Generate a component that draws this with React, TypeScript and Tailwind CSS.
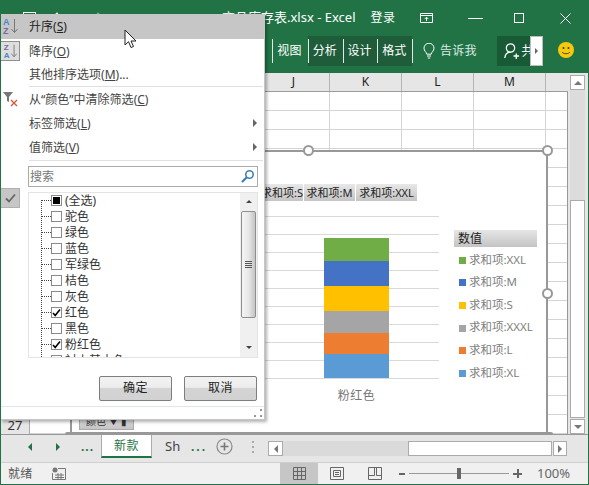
import React from "react";

const FONT = { fontFamily: '"Noto Sans","Noto Sans CJK SC",sans-serif' };
const rows = Array.from({ length: 18 });
const listItems: [string, "none" | "mixed" | "checked"][] = [
  ["(全选)", "mixed"],
  ["驼色", "none"],
  ["绿色", "none"],
  ["蓝色", "none"],
  ["军绿色", "none"],
  ["桔色", "none"],
  ["灰色", "none"],
  ["红色", "checked"],
  ["黑色", "none"],
  ["粉红色", "checked"],
  ["衬上基本色", "none"],
];
const legend = [
  ["#70ad47", "求和项:XXL"],
  ["#4472c4", "求和项:M"],
  ["#ffc000", "求和项:S"],
  ["#a5a5a5", "求和项:XXXL"],
  ["#ed7d31", "求和项:L"],
  ["#5b9bd5", "求和项:XL"],
];

function Handle({ className }: { className: string }) {
  return <div className={`absolute w-[11px] h-[11px] rounded-full bg-white border-2 border-[#989898] ${className}`} />;
}

function Dome({ className }: { className: string }) {
  return <div className={`absolute w-[11px] h-[2px] rounded-t-full bg-[#989898] ${className}`} />;
}

function SortIcon({ top, bottom }: { top: string; bottom: string }) {
  return (
    <svg width="20" height="20" viewBox="0 0 20 20">
      <text x="3" y="9" fontSize="9" fontWeight="700" fontFamily="Liberation Sans" fill={top === "A" ? "#4a86c8" : "#8064a2"}>{top}</text>
      <text x="3" y="18" fontSize="9" fontWeight="700" fontFamily="Liberation Sans" fill={bottom === "A" ? "#4a86c8" : "#8064a2"}>{bottom}</text>
      <path d="M14.5 3v13M11.5 13l3 3.5 3-3.5" fill="none" stroke="#777" strokeWidth="1" />
    </svg>
  );
}

function MenuRow({ label, k, suffix, arrow, active, icon, boxed }: { label: string; k: string; suffix?: string; arrow?: boolean; active?: boolean; icon?: React.ReactNode; boxed?: boolean }) {
  return (
    <div className={`h-[24px] flex items-center relative ${active ? "bg-[#c6c6c6] text-[#222]" : "text-[#444]"}`}>
      <div className={`w-[20px] h-[20px] flex items-center justify-center ${boxed ? "border border-[#8f8f8f] bg-[#dedede]" : ""}`}>{icon}</div>
      <span className="ml-[9px] relative top-[1px] text-[12px] leading-none whitespace-nowrap">
        {label}(<span className="underline">{k}</span>){suffix}
      </span>
      {arrow && <div className="absolute right-[7px] w-0 h-0 border-y-[4px] border-y-transparent border-l-[4px] border-l-[#666]" />}
    </div>
  );
}

function CheckBox({ state }: { state: "none" | "mixed" | "checked" }) {
  return (
    <div className="w-[11px] h-[11px] -mt-px border border-[#8a8a8a] bg-white flex items-center justify-center shrink-0">
      {state === "mixed" && <div className="w-[7px] h-[7px] bg-black" />}
      {state === "checked" && (
        <svg width="9" height="9" viewBox="0 0 9 9"><path d="M1 5l2.2 2.5L8 1.5" fill="none" stroke="#000" strokeWidth="1.6" /></svg>
      )}
    </div>
  );
}

function Menu() {
  return (
    <div className="absolute left-[-1px] top-[14px] w-[265px] h-[406px] bg-white border-r border-b border-[#c6c6c6] shadow-[2px_2px_3px_rgba(0,0,0,0.3)] flex flex-col">
      <div className="h-[25px] flex flex-col justify-center bg-[#c6c6c6]">
        <MenuRow active label="升序" k="S" icon={<SortIcon top="A" bottom="Z" />} />
      </div>
      <MenuRow boxed label="降序" k="O" icon={<SortIcon top="Z" bottom="A" />} />
      <MenuRow label="其他排序选项" k="M" suffix="..." />
      <div className="h-px bg-[#e0e0e0] ml-[29px] mr-px" />
      <div>
        <MenuRow
          label="从“颜色”中清除筛选"
          k="C"
          icon={
            <svg width="18" height="18" viewBox="0 0 18 18">
              <path d="M2 2h10L8 7v5L6 11V7z" fill="#777" />
              <path d="M10 10l6 6M16 10l-6 6" stroke="#d9553a" strokeWidth="1.4" />
            </svg>
          }
        />
        <MenuRow label="标签筛选" k="L" arrow />
        <MenuRow label="值筛选" k="V" arrow />
      </div>
      <div className="h-px bg-[#e0e0e0] ml-[29px] mr-px mt-[1px]" />
      <div className="relative ml-[28px] mr-[6px] mt-[5px] h-[21px] border border-[#ababab] bg-white flex items-center justify-between pl-[1px] pr-[2px]">
        <span className="text-[12px] text-[#777] leading-none">搜索</span>
        <svg width="15" height="15" viewBox="0 0 15 15">
          <circle cx="9.5" cy="5.5" r="3.7" fill="none" stroke="#3f7fb5" strokeWidth="1.6" />
          <path d="M6.8 8.2L2 13" stroke="#3f7fb5" strokeWidth="2.2" />
        </svg>
      </div>
      <div className="absolute left-0 top-[174px] w-[20px] h-[20px] bg-[#c6c6c6] border border-[#b0b0b0] flex items-center justify-center">
        <svg width="11" height="10" viewBox="0 0 11 10"><path d="M1 5.5l3 3L10 1.5" fill="none" stroke="#666" strokeWidth="1.8" /></svg>
      </div>
      <div className="ml-[28px] mr-[6px] mt-[5px] h-[168px] border border-[#e4e4e4] bg-white flex overflow-hidden">
        <div className="flex-1 pl-[22px] relative overflow-hidden">
          <div className="absolute left-[12px] top-[7px] bottom-0 border-l border-dotted border-[#444]" />
          <div>
            {listItems.map(([t, s]) => (
              <div key={t} className="h-[16px] flex items-center relative">
                <div className="absolute left-[-9px] w-[9px] border-t border-dotted border-[#444]" />
                <CheckBox state={s} />
                <span className="ml-[3px] text-[12px] leading-none text-[#333] whitespace-nowrap">{t}</span>
              </div>
            ))}
          </div>
        </div>
        <div className="w-[17px] bg-[#f0f0f0] flex flex-col items-center shrink-0">
          <div className="h-[18px] flex items-center justify-center">
            <div className="w-0 h-0 border-x-[3px] border-x-transparent border-b-[3px] border-b-[#444]" />
          </div>
          <div className="w-[15px] h-[107px] rounded-[2px] border border-[#8f8f8f] bg-gradient-to-r from-[#f4f4f4] via-[#e8e8e8] to-[#c4c4c4] flex flex-col items-center justify-center gap-[1px]">
            <div className="w-[7px] h-px bg-[#555]" />
            <div className="w-[7px] h-px bg-[#555]" />
            <div className="w-[7px] h-px bg-[#555]" />
            <div className="w-[7px] h-px bg-[#555]" />
          </div>
          <div className="flex-1" />
          <div className="h-[18px] flex items-center justify-center">
            <div className="w-0 h-0 border-x-[3px] border-x-transparent border-t-[3px] border-t-[#444]" />
          </div>
        </div>
      </div>
      <div className="flex justify-end gap-[12px] mr-[7px] mt-[18px]">
        {["确定", "取消"].map((t) => (
          <div key={t} className="w-[73px] h-[25px] rounded-[2px] border border-[#7e7e7e] bg-[linear-gradient(#f2f2f2_0%,#ededed_45%,#d4d4d4_50%,#d2d2d2_100%)] flex items-center justify-center text-[12px] text-[#222] tracking-[0.5px]">
            {t}
          </div>
        ))}
      </div>
      <div className="mt-[5px] flex-1 border-t border-[#dfe6ec] bg-white flex justify-end items-end p-[2px]">
        <div className="grid grid-cols-3 gap-[1px] w-[8px] h-[8px]">
          <span /><span /><span className="bg-[#999]" />
          <span /><span /><span />
          <span className="bg-[#999]" /><span /><span className="bg-[#999]" />
        </div>
      </div>
    </div>
  );
}

function Chart() {
  return (
    <div className="absolute left-[69px] top-[150px] w-[478px] h-[284px] bg-white border-2 border-[#989898]">
      <div className="absolute left-[190px] top-[32px] flex gap-px">
        {["求和项:S", "求和项:M", "求和项:XXL"].map((t, i) => (
          <div key={t} className={`h-[17px] flex items-center text-[11px] text-[#222] bg-gradient-to-b from-[#e8e8e8] to-[#c4c4c4] overflow-hidden ${i === 0 ? "w-[41px] justify-end" : i === 1 ? "w-[51px] justify-center" : "w-[61px] justify-center"}`}>
            <span className="whitespace-nowrap relative top-[1px]">{t}</span>
          </div>
        ))}
      </div>
      <div className="absolute left-[190px] top-[64px] w-[177px] flex flex-col">
        {Array.from({ length: 10 }).map((_, i) => (
          <div key={i} className="h-[18px] border-t border-[#d9d9d9]" />
        ))}
      </div>
      <div className="absolute left-[252px] top-[86px] w-[65px] flex flex-col">
        <div className="h-[23px] bg-[#70ad47]" />
        <div className="h-[25px] bg-[#4472c4]" />
        <div className="h-[25px] bg-[#ffc000]" />
        <div className="h-[22px] bg-[#a5a5a5]" />
        <div className="h-[21px] bg-[#ed7d31]" />
        <div className="h-[24px] bg-[#5b9bd5]" />
      </div>
      <div className="absolute left-[252px] top-[235px] w-[65px] text-center text-[12px] text-[#777] whitespace-nowrap tracking-[0.5px]">粉红色</div>
      <div className="absolute left-[382px] top-[78px] w-[83px] h-[17px] bg-gradient-to-b from-[#e6e6e6] to-[#c4c4c4] flex items-center pl-[4px] text-[12px] text-[#222]">数值</div>
      <div className="absolute left-[387px] top-[97px] flex flex-col">
        {legend.map(([c, t]) => (
          <div key={t} className="h-[22.6px] flex items-center gap-[3px]">
            <div className="w-[7px] h-[7px]" style={{ background: c }} />
            <span className="text-[11.5px] text-[#808080] whitespace-nowrap relative top-[-1px]">{t}</span>
          </div>
        ))}
      </div>
    </div>
  );
}

export default function App() {
  return (
    <div className="relative w-[589px] h-[485px] overflow-hidden bg-[#e6e6e6] flex flex-col border-x border-b border-[#217346]" style={FONT}>
      {/* title bar */}
      <div className="h-[36px] bg-[#217346] text-white flex items-center shrink-0 relative">
        <div className="flex items-center">
          <div className="ml-[22px] w-[13px] h-[13px] border border-white" />
          <div className="ml-[17px] w-[8px] h-[8px] border-l-2 border-t-2 border-white -rotate-45" />
          <div className="ml-[33px] w-[8px] h-[8px] border-r-2 border-t-2 border-[#7fae95] rotate-45" />
        </div>
        <span className="ml-[120px] text-[13px] whitespace-nowrap">商品库存表.xlsx - Excel</span>
        <span className="ml-[15px] text-[12px] tracking-[0.5px]">登录</span>
        <svg className="ml-[24px]" width="14" height="11" viewBox="0 0 14 11">
          <path d="M.5.5h12v9H.5zM.5 2.5h12M6.5 8V4.5M4.7 6l1.8-1.8L8.3 6" fill="none" stroke="#fff" />
        </svg>
        <div className="ml-[34px] w-[15px] h-px bg-white" />
        <div className="ml-[31px] w-[10px] h-[10px] border border-white" />
        <svg className="ml-[36px]" width="11" height="11" viewBox="0 0 11 11">
          <path d="M.5.5l10 10M10.5.5l-10 10" stroke="#fff" />
        </svg>
      </div>
      {/* ribbon tabs */}
      <div className="h-[37px] bg-[#217346] text-white shrink-0 pb-[7px] flex items-stretch relative text-[12px]">
        <div className="w-[271px]" />
        <div className="w-[36px] pr-[2px] flex items-center justify-center border-l border-[#e0ebe5] my-[3px] tracking-[0.3px]">视图</div>
        <div className="flex bg-[#1e5c3a] w-[104px]">
          {["分析", "设计", "格式"].map((t) => (
            <div key={t} className="w-[35px] pr-[2px] flex items-center justify-center border-l border-[#e0ebe5] my-[3px]">{t}</div>
          ))}
        </div>
        <div className="border-l border-[#e0ebe5] my-[3px]" />
        <div className="ml-[10px] flex items-center gap-[4px] text-[#dfe9e3]">
          <svg width="12" height="16" viewBox="0 0 12 16">
            <path d="M3.8 11.2C3.5 9 1 8 1 5.2a5 5 0 0 1 10 0C11 8 8.5 9 8.2 11.2zM4 13h4M4.8 15h2.4" fill="none" stroke="#fff" />
          </svg>
          <span className="ml-[1px] tracking-[0.2px]">告诉我</span>
        </div>
        <div className="ml-[20px] w-[33px] bg-[#185a36] flex items-center pl-[7px] overflow-hidden">
          <svg width="15" height="16" viewBox="0 0 15 16" className="shrink-0">
            <circle cx="6.5" cy="5" r="4.2" fill="none" stroke="#fff" strokeWidth="1.2" />
            <path d="M.8 15c.4-3.500 2.700-5.800 5.700-5.800M9.500 13h5.500M12.250 10.500v5.500" fill="none" stroke="#fff" strokeWidth="1.300" />
          </svg>
          <span className="ml-[3px] text-[13px] whitespace-nowrap">共享</span>
        </div>
        <div className="w-[13px] bg-white border border-[#bdbdbd] flex items-center justify-center">
          <div className="w-0 h-0 border-y-[3px] border-y-transparent border-l-[3px] border-l-[#666]" />
        </div>
        <div className="ml-[15px] self-start mt-[6px]">
          <svg width="16" height="16" viewBox="0 0 16 16" className="block">
            <circle cx="8" cy="8" r="8" fill="#f7c90c" />
            <circle cx="5.5" cy="6" r="1.1" fill="#444" />
            <circle cx="10.5" cy="6" r="1.1" fill="#444" />
            <path d="M4 10c1.500 2.300 6.500 2.300 8 0" fill="none" stroke="#444" />
          </svg>
        </div>
      </div>
      {/* sheet */}
      <div className="flex flex-1 min-h-0">
        <div className="w-[567px] flex flex-col shrink-0">
          <div className="h-[19px] bg-[#e6e6e6] border-b border-[#9c9c9c] flex text-[12px] text-[#222] shrink-0">
            <div className="w-[257px]" />
            {["J", "K", "L", "M"].map((c) => (
              <div key={c} className="w-[72px] flex items-center justify-center border-r border-[#b4b4b4]">{c}</div>
            ))}
          </div>
          <div className="h-[342px] bg-white border-r border-[#989898] overflow-hidden">
            {rows.map((_, i) => (
              <div key={i} className="h-[19px] border-b border-[#d4d4d4] flex">
                <div className="w-[257px]" />
                {[0, 1, 2, 3].map((j) => (
                  <div key={j} className="w-[72px] border-r border-[#d4d4d4]" />
                ))}
              </div>
            ))}
          </div>
        </div>
        <div className="flex-1 pl-[2px] pr-[3px] flex flex-col">
          <div className="h-[15px] mt-[2px] bg-white border border-[#ababab] flex items-center justify-center shrink-0">
            <div className="w-0 h-0 border-x-[4px] border-x-transparent border-b-[4px] border-b-[#777]" />
          </div>
          <div className="h-[110px] bg-[#dcdcdc] shrink-0" />
          <div className="flex-1 bg-white border border-[#ababab]" />
          <div className="h-[15px] mt-[1px] bg-white border border-[#ababab] flex items-center justify-center shrink-0">
            <div className="w-0 h-0 border-x-[4px] border-x-transparent border-t-[4px] border-t-[#777]" />
          </div>
        </div>
      </div>
      {/* sheet tabs */}
      <div className="h-[28px] bg-[#e6e6e6] flex items-stretch shrink-0 text-[12px] pb-[4px] border-t border-[#989898] relative z-10">
        <div className="w-[100px] flex items-center text-[#1f7244]">
          <div className="ml-[27px] w-0 h-0 border-y-[4px] border-y-transparent border-r-[4px] border-r-[#1f7244]" />
          <div className="ml-[24px] w-0 h-0 border-y-[4px] border-y-transparent border-l-[4px] border-l-[#1f7244]" />
          <span className="ml-[21px] font-bold tracking-[1px]">...</span>
        </div>
        <div className="w-[51px] bg-white border-x border-[#ababab] border-b-[2px] border-b-[#217346] flex items-center justify-center text-[#1f7244] tracking-[0.5px]">新款</div>
        <div className="w-[116px] flex items-center">
          <div className="ml-[13px] w-[26px] overflow-hidden text-[#444] text-[13px]">
            <span className="whitespace-nowrap">Sh</span>
          </div>
          <span className="w-[15px] font-bold text-[#1f7244] tracking-[2px]">...</span>
          <svg className="ml-[10px]" width="17" height="17" viewBox="0 0 17 17">
            <circle cx="8.5" cy="8.5" r="7.5" fill="none" stroke="#8a8a8a" strokeWidth="1.2" />
            <path d="M8.5 4.500v8M4.500 8.500h8" stroke="#777" strokeWidth="1.6" />
          </svg>
          <div className="ml-[19px] flex flex-col gap-[3px]">
            <div className="w-[2px] h-[2px] bg-[#aaa]" /><div className="w-[2px] h-[2px] bg-[#aaa]" /><div className="w-[2px] h-[2px] bg-[#aaa]" />
          </div>
        </div>
        <div className="w-[15px] h-[15px] mt-[6px] bg-white border border-[#ababab] flex items-center justify-center">
          <div className="w-0 h-0 border-y-[4px] border-y-transparent border-r-[4px] border-r-[#777]" />
        </div>
        <div className="w-[125px] h-[15px] mt-[6px] bg-[#dadada]" />
        <div className="w-[144px] h-[15px] mt-[6px] bg-white border border-[#ababab]" />
        <div className="ml-px w-[14px] h-[15px] mt-[6px] bg-white border border-[#ababab] flex items-center justify-center">
          <div className="w-0 h-0 border-y-[4px] border-y-transparent border-l-[4px] border-l-[#777]" />
        </div>
      </div>
      {/* status bar */}
      <div className="flex-none h-[22px] bg-[#f0f0f0] border-t border-[#cfcfcf] flex items-center text-[12px] text-[#555]">
        <span className="ml-[7px] w-[24px] tracking-[0.3px] whitespace-nowrap">就绪</span>
        <svg className="ml-[20px]" width="14" height="13" viewBox="0 0 14 13">
          <circle cx="3" cy="3" r="2.5" fill="#777" />
          <path d="M6 1.500h7.500v11H.5V6M3 8h9M3 10.500h9M6 6v6M9 6v6" fill="none" stroke="#777" />
        </svg>
        <div className="ml-[214px] w-[38px] h-full bg-[#c6c6c6] flex items-center justify-center">
          <svg width="13" height="13" viewBox="0 0 13 13"><path d="M.5.5h12v12H.5zM.5 4.500h12M.5 8.500h12M4.500.5v12M8.500.5v12" fill="none" stroke="#666" /></svg>
        </div>
        <svg className="ml-[12px]" width="14" height="13" viewBox="0 0 14 13"><path d="M.5.5h13v12H.5zM3.500 3.500h7v6h-7zM5 5.500h4M5 7.500h4" fill="none" stroke="#666" /></svg>
        <svg className="ml-[24px]" width="14" height="13" viewBox="0 0 14 13"><path d="M.5.5h13v12H.5zM.5 8.500h6V.5M8.500.5v8h5" fill="none" stroke="#666" /></svg>
        <div className="ml-[17px] w-[6px] h-[2px] bg-[#666]" />
        <div className="ml-[4px] w-[100px] h-px bg-[#9a9a9a] relative">
          <div className="absolute left-[48px] top-[-5px] w-[4px] h-[11px] bg-[#666]" />
        </div>
        <div className="ml-[4px] w-[9px] h-[9px] relative">
          <div className="absolute left-0 top-[3.5px] w-[9px] h-[2px] bg-[#666]" />
          <div className="absolute left-[3.5px] top-0 w-[2px] h-[9px] bg-[#666]" />
        </div>
        <span className="ml-[15px] text-[13px] text-[#666]">100%</span>
      </div>

      {/* overlays */}
      <Chart />
      <Handle className="left-[302px] top-[145px]" />
      <Handle className="left-[541px] top-[145px]" />
      <Handle className="left-[541px] top-[288px]" />
      <Dome className="left-[302px] top-[432px]" />
      <Dome className="left-[541px] top-[432px]" />
      <Dome className="left-[64px] top-[432px]" />
      <div className="absolute left-0 top-[415px] w-[29px] h-[20px] bg-[#e6e6e6] border-r border-[#ababab] flex items-center justify-center text-[13px] text-[#333] leading-none">27</div>
      <div className="absolute left-[78px] top-[412px] w-[55px] h-[18px] bg-gradient-to-b from-[#e8e8e8] to-[#c4c4c4] border border-[#ababab] flex items-center justify-center text-[10px] text-[#333]">颜色 ▼ ▮</div>
      <Menu />
      <svg className="absolute left-[123px] top-[29px]" width="14" height="20" viewBox="0 0 14 20">
        <path d="M1 1v15l3.500-3.300L7 18.500l2.500-1-2.500-5.500H12z" fill="#fff" stroke="#222" />
      </svg>
    </div>
  );
}
